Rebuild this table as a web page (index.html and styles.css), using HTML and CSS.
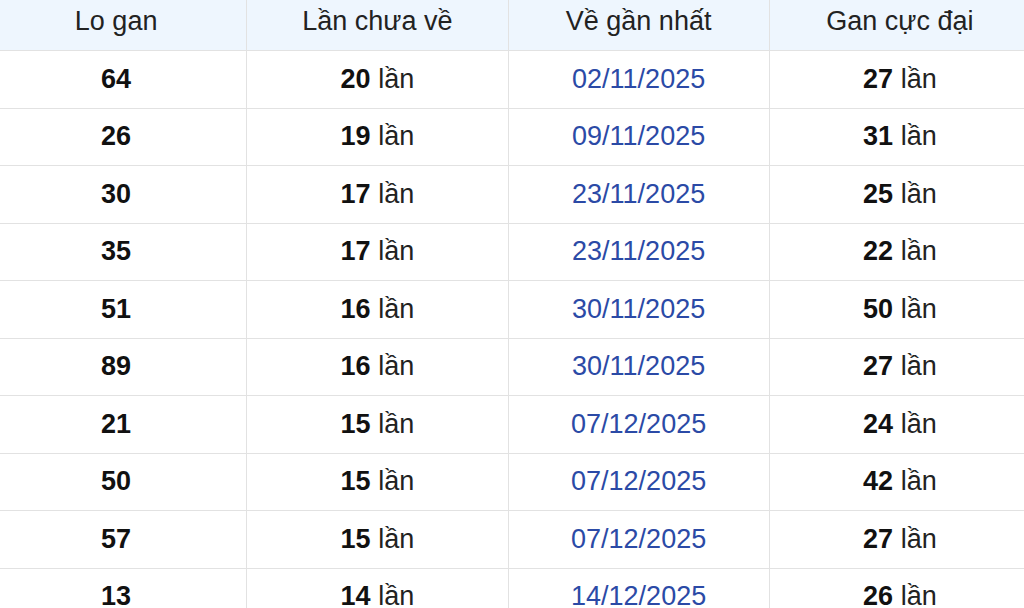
FILE: index.html
```html
<!DOCTYPE html>
<html lang="vi">
<head>
<meta charset="utf-8">
<title>Lo gan</title>
<link rel="stylesheet" href="styles.css">
</head>
<body>
<table class="gan-table">
  <thead>
    <tr><th>Lo gan</th><th>Lần chưa về</th><th>Về gần nhất</th><th>Gan cực đại</th></tr>
  </thead>
  <tbody>
    <tr><td><b>64</b></td><td><b>20</b> lần</td><td class="date">02/11/2025</td><td><b>27</b> lần</td></tr>
    <tr><td><b>26</b></td><td><b>19</b> lần</td><td class="date">09/11/2025</td><td><b>31</b> lần</td></tr>
    <tr><td><b>30</b></td><td><b>17</b> lần</td><td class="date">23/11/2025</td><td><b>25</b> lần</td></tr>
    <tr><td><b>35</b></td><td><b>17</b> lần</td><td class="date">23/11/2025</td><td><b>22</b> lần</td></tr>
    <tr><td><b>51</b></td><td><b>16</b> lần</td><td class="date">30/11/2025</td><td><b>50</b> lần</td></tr>
    <tr><td><b>89</b></td><td><b>16</b> lần</td><td class="date">30/11/2025</td><td><b>27</b> lần</td></tr>
    <tr><td><b>21</b></td><td><b>15</b> lần</td><td class="date">07/12/2025</td><td><b>24</b> lần</td></tr>
    <tr><td><b>50</b></td><td><b>15</b> lần</td><td class="date">07/12/2025</td><td><b>42</b> lần</td></tr>
    <tr><td><b>57</b></td><td><b>15</b> lần</td><td class="date">07/12/2025</td><td><b>27</b> lần</td></tr>
    <tr><td><b>13</b></td><td><b>14</b> lần</td><td class="date">14/12/2025</td><td><b>26</b> lần</td></tr>
  </tbody>
</table>
</body>
</html>
```
FILE: styles.css
```css
html, body {
  margin: 0;
  padding: 0;
  background: #ffffff;
  overflow: hidden;
}
body {
  width: 1024px;
  height: 608px;
}
.gan-table {
  border-collapse: collapse;
  table-layout: fixed;
  width: 1046px;
  margin-left: -15px;
  margin-top: -7.5px;
  font-family: "Liberation Sans", Arial, sans-serif;
  font-size: 27px;
  color: #1a1a1a;
}
.gan-table th,
.gan-table td {
  height: 57.5px;
  padding: 0;
  text-align: center;
  vertical-align: middle;
  border: 1px solid #e2e2e2;
  box-sizing: border-box;
}
.gan-table th {
  background: #eef6fe;
  font-weight: normal;
  color: #222222;
}
.gan-table b {
  font-weight: bold;
  color: #111111;
}
.gan-table td {
  color: #222222;
}
.gan-table td.date {
  color: #2b4aa6;
}
```
